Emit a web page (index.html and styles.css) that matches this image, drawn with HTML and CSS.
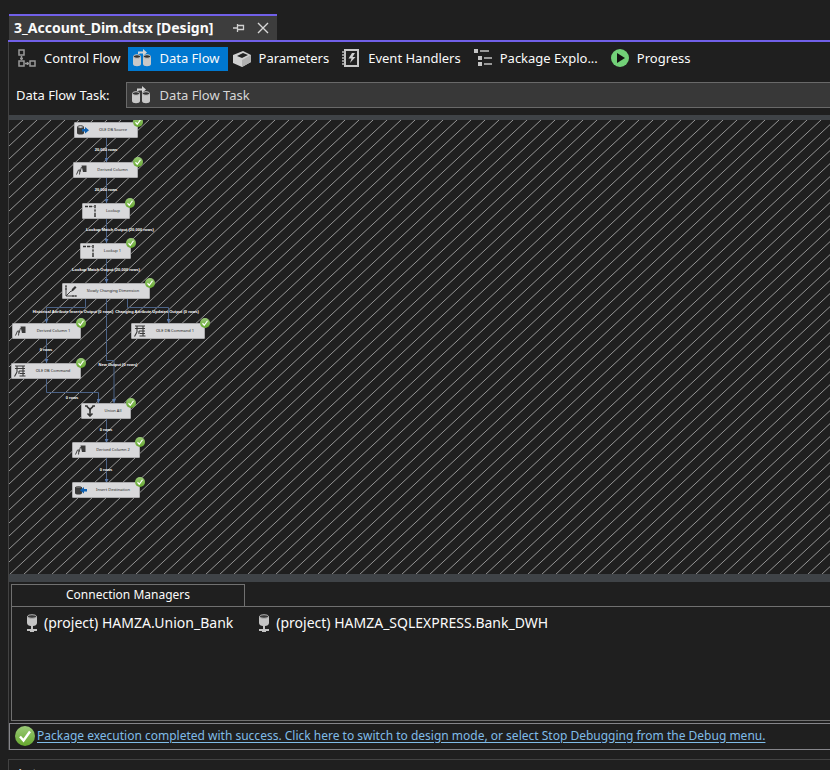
FILE: index.html
```html
<!DOCTYPE html>
<html lang="en">
<head>
<meta charset="utf-8">
<title>3_Account_Dim.dtsx [Design]</title>
<link rel="stylesheet" href="styles.css">
</head>
<body>
<svg class="defs" width="0" height="0" aria-hidden="true">
  <defs>
    <linearGradient id="green" x1="0" y1="0" x2="0" y2="1">
      <stop offset="0" stop-color="#9aca78"/><stop offset="1" stop-color="#66a82e"/>
    </linearGradient>
    <symbol id="check" viewBox="0 0 20 20">
      <circle cx="10" cy="10" r="10" fill="url(#green)"/>
      <path d="M5 10.5l3.5 4L15 5.5" fill="none" stroke="#fff" stroke-width="2.4"/>
    </symbol>
    <symbol id="dataflow" viewBox="0 0 20 20">
      <path d="M1 9v7c0 3 8 3 8 0V9zM11 9v7c0 3 8 3 8 0V9z" fill="#c8c8c8"/>
      <ellipse cx="5" cy="8.5" rx="3.5" ry="1.8" fill="#333" stroke="#c8c8c8"/>
      <ellipse cx="15" cy="8.5" rx="3.5" ry="1.8" fill="#333" stroke="#c8c8c8"/>
      <path d="M6 6V3.500h5V1l4 3.500L11 8V5.500H7.500V6z" fill="#d4d4d4"/>
    </symbol>
    <symbol id="server" viewBox="0 0 12 18">
      <path d="M1 2v7c0 2 2 3 4 3v3H1v2h3v1h4v-1h3v-2H7v-3c2 0 4-1 4-3V2z" fill="#c4c4c4"/>
      <ellipse cx="6" cy="2.500" rx="4.500" ry="1.800" fill="#3a3a3a" stroke="#b0b0b0"/>
    </symbol>
    <symbol id="n-source" viewBox="0 0 12 12">
      <path d="M0 3v6c0 2 7 2 7 0V3z" fill="#3a3a3a"/><ellipse cx="3.500" cy="3" rx="3" ry="1.300" fill="#ddd" stroke="#3a3a3a"/>
      <path d="M5 5h3V3l4 3.200L8 9.500v-2H5z" fill="#0d5fae"/>
    </symbol>
    <symbol id="n-dest" viewBox="0 0 12 12">
      <path d="M0 3v6c0 2 7 2 7 0V3z" fill="#3a3a3a"/><ellipse cx="3.500" cy="3" rx="3" ry="1" fill="#666"/>
      <path d="M12 5H9V3L5 6.200 9 9.500v-2h3z" fill="#0d5fae"/>
    </symbol>
    <symbol id="n-derived" viewBox="0 0 12 12">
      <path d="M5.500 1.500H10.500V8H7z" fill="#3a3a3a"/>
      <path d="M.5 10.500l2-4.500h1.500l-.5 4.500M4 8l1.500-5" fill="none" stroke="#444" stroke-width="1"/>
    </symbol>
    <symbol id="n-lookup" viewBox="0 0 12 12">
      <path d="M0 1.500h3M4 1.500h3M10 0v3M10 4.500v2M10 8v4" stroke="#333" stroke-width="1.500"/>
      <path d="M7 1.500h3v9" fill="none" stroke="#777" stroke-width=".6"/>
    </symbol>
    <symbol id="n-scd" viewBox="0 0 12 12">
      <path d="M1 1v10h10M1 11l5-5" fill="none" stroke="#444"/><path d="M0 1h2M0 4h2M8 10v2M11 10v2" stroke="#333"/>
      <path d="M6 7l1-3 3-3 1.500 1.500-3 3z" fill="#333"/>
    </symbol>
    <symbol id="n-command" viewBox="0 0 12 12">
      <path d="M1 1h10M1 3.500h10M3 1v6M9 1v10M5 6h6M6 8.500h5M5.500 11h6M3 7L.5 11.500M5 6v3" fill="none" stroke="#3a3a3a" stroke-width="1.100"/>
    </symbol>
    <symbol id="n-union" viewBox="0 0 12 12">
      <path d="M1 1h2c1 3 3 1 3 5 0-4 2-2 3-5h2M6 5v6M3.500 8.500L6 11l2.500-2.500" fill="none" stroke="#333" stroke-width="1.600"/>
    </symbol>
  </defs>
</svg>

<div class="app">
  <header class="doc-tabs">
    <div class="doc-tab">
      <span class="doc-title">3_Account_Dim.dtsx [Design]</span>
      <button class="tab-button" aria-label="Pin tab">
        <svg width="12" height="12" viewBox="0 0 12 12"><path d="M0 6h4M4.500 2v8M5 3.500h5.500V8M5 7.500h6" fill="none" stroke="#d0d0d0" stroke-width="1.300"/></svg>
      </button>
      <button class="tab-button" aria-label="Close tab">
        <svg width="12" height="12" viewBox="0 0 12 12"><path d="M1 1l10 10M11 1L1 11" stroke="#d8d8d8" stroke-width="1.400"/></svg>
      </button>
    </div>
  </header>

  <main class="designer">
    <nav class="views">
      <button class="view">
        <svg width="20" height="20" viewBox="0 0 20 20" fill="none" stroke="#9a9a9a" stroke-width="1.500"><path d="M2 2h5v5H2zM2 13h5v5H2zM13 13h5v5h-5zM4.500 8v4M3 10.500h3M8 15.500h4M10.500 14v3"/></svg>
        <span>Control Flow</span>
      </button>
      <button class="view active"><svg width="20" height="20"><use href="#dataflow"/></svg><span>Data Flow</span></button>
      <button class="view">
        <svg width="20" height="20" viewBox="0 0 20 20"><path d="M1 7l10-4 8 4v7l-9 5-9-4z" fill="#d0d0d0"/><path d="M5 8l6-3 5 2-6 3z" fill="#222"/><path d="M10 12l9-5v7l-9 5z" fill="#b0b0b0"/></svg>
        <span>Parameters</span>
      </button>
      <button class="view">
        <svg width="20" height="20" viewBox="0 0 20 20"><path d="M4 2h13v16H4z" fill="#222" stroke="#c8c8c8" stroke-width="2"/><path d="M1 4h4M1 7h4M1 10h4M1 13h4M1 16h4" stroke="#bbb" stroke-width="1.300"/><path d="M11 5L7.500 10.500h3L9 15l5.500-6h-3L14 5z" fill="#d0d0d0"/></svg>
        <span>Event Handlers</span>
      </button>
      <button class="view">
        <svg width="20" height="20" viewBox="0 0 20 20"><path d="M1 1h4v4H1zM5 8h4v4H5zM5 14h4v4H5z" fill="#c4c4c4"/><path d="M7 3h9M11 10h8M11 16h8" stroke="#999" stroke-width="2"/></svg>
        <span>Package Explo...</span>
      </button>
      <button class="view">
        <svg width="20" height="20" viewBox="0 0 20 20"><circle cx="10" cy="10" r="9" fill="#72d078"/><path d="M7 5l8 5-8 5z" fill="#111"/></svg>
        <span>Progress</span>
      </button>
    </nav>

    <div class="task-row">
      <label for="task">Data Flow Task:</label>
      <div class="task-field">
        <svg class="task-icon" width="20" height="20" aria-hidden="true"><use href="#dataflow"/></svg>
        <select id="task"><option>Data Flow Task</option></select>
      </div>
    </div>

    <section class="canvas" aria-label="Data flow">
      <svg class="wires" width="100%" height="100%">
        <defs>
          <pattern id="hatch" width="14" height="13" patternUnits="userSpaceOnUse">
            <path d="M14 0L0 13M1.400 -1.300L-1.400 1.300M15.400 11.700L12.600 14.300" stroke="#959595" stroke-width="1"/>
          </pattern>
          <marker id="arrow" viewBox="0 0 4 4" refX="2" refY="4" markerWidth="4" markerHeight="4" markerUnits="userSpaceOnUse"><path d="M0 0h4L2 4z" fill="#5a78a8"/></marker>
        </defs>
        <rect width="100%" height="100%" fill="url(#hatch)"/>
        <g class="edges">
          <path d="M97.500 18v24"/>
          <path d="M97.500 58v25"/>
          <path d="M97.500 98v25"/>
          <path d="M97.500 138v25"/>
          <path d="M76.500 178v9.500h-39v15.500"/>
          <path d="M118.500 178v9.500h41v15.500"/>
          <path d="M97.500 178v62.500h7.500v42.500"/>
          <path d="M37.500 218v25"/>
          <path d="M37.500 258v14.500h52v10.500"/>
          <path d="M97.500 298v25"/>
          <path d="M97.500 338v25"/>
        </g>
      </svg>

      <div class="node n1"><svg><use href="#n-source"/></svg><span>OLE DB Source</span><svg class="ok"><use href="#check"/></svg></div>
      <div class="node n2"><svg><use href="#n-derived"/></svg><span>Derived Column</span><svg class="ok"><use href="#check"/></svg></div>
      <div class="node n3"><svg><use href="#n-lookup"/></svg><span>Lookup</span><svg class="ok"><use href="#check"/></svg></div>
      <div class="node n4"><svg><use href="#n-lookup"/></svg><span>Lookup 1</span><svg class="ok"><use href="#check"/></svg></div>
      <div class="node n5"><svg><use href="#n-scd"/></svg><span>Slowly Changing Dimension</span><svg class="ok"><use href="#check"/></svg></div>
      <div class="node n6"><svg><use href="#n-derived"/></svg><span>Derived Column 1</span><svg class="ok"><use href="#check"/></svg></div>
      <div class="node n7"><svg><use href="#n-command"/></svg><span>OLE DB Command 1</span><svg class="ok"><use href="#check"/></svg></div>
      <div class="node n8"><svg><use href="#n-command"/></svg><span>OLE DB Command</span><svg class="ok"><use href="#check"/></svg></div>
      <div class="node n9"><svg><use href="#n-union"/></svg><span>Union All</span><svg class="ok"><use href="#check"/></svg></div>
      <div class="node n10"><svg><use href="#n-derived"/></svg><span>Derived Column 2</span><svg class="ok"><use href="#check"/></svg></div>
      <div class="node n11"><svg><use href="#n-dest"/></svg><span>Insert Destination</span><svg class="ok"><use href="#check"/></svg></div>

      <span class="rows r1">20,000 rows</span>
      <span class="rows r2">20,000 rows</span>
      <span class="rows r3">Lookup Match Output (20,000 rows)</span>
      <span class="rows r4">Lookup Match Output (20,000 rows)</span>
      <span class="rows r5">Historical Attribute Inserts Output (0 rows)</span>
      <span class="rows r6">Changing Attribute Updates Output (0 rows)</span>
      <span class="rows r7">0 rows</span>
      <span class="rows r8">New Output (0 rows)</span>
      <span class="rows r9">0 rows</span>
      <span class="rows r10">0 rows</span>
      <span class="rows r11">0 rows</span>
    </section>

    <section class="connections">
      <h2>Connection Managers</h2>
      <ul>
        <li><svg width="12" height="18" aria-hidden="true"><use href="#server"/></svg>(project) HAMZA.Union_Bank</li>
        <li><svg width="12" height="18" aria-hidden="true"><use href="#server"/></svg>(project) HAMZA_SQLEXPRESS.Bank_DWH</li>
      </ul>
    </section>

    <div class="status">
      <svg width="20" height="20" aria-hidden="true"><use href="#check"/></svg>
      <a href="#design">Package execution completed with success. Click here to switch to design mode, or select Stop Debugging from the Debug menu.</a>
    </div>
  </main>

  <section class="autos">Autos</section>
</div>
</body>
</html>
```
FILE: styles.css
```css
* { box-sizing: border-box; }
body {
  margin: 0;
  background: #1f1f1f;
  color: #fafafa;
  font: 13px/20px "Noto Sans", "Open Sans", sans-serif;
}
button, select { font: inherit; color: inherit; }
button { background: none; border: 0; padding: 0; }
svg { flex: none; }
.defs { position: absolute; }
.app {
  height: 100vh;
  overflow: hidden;
  padding: 14px 0 0 8px;
  display: flex;
  flex-direction: column;
}

.doc-tabs { display: flex; padding-left: 1px; border-bottom: 2px solid #7160e8; }
.doc-tab {
  display: flex;
  align-items: center;
  height: 26px;
  width: 268px;
  padding: 0 8px 0 5px;
  border-top: 2px solid #7160e8;
  background: #3d3d3d;
}
.doc-title { flex: 1; font-size: 14px; font-weight: 700; white-space: nowrap; }
.tab-button { display: flex; margin-left: 12px; }

.designer {
  flex: 1;
  min-height: 0;
  display: flex;
  flex-direction: column;
  border-left: 1px solid #424242;
}
.views { display: flex; padding: 5px 0 0 4px; }
.view {
  display: flex;
  align-items: center;
  gap: 7px;
  height: 24px;
  padding: 0 8px 2px 4px;
  white-space: nowrap;
}
.view.active { background: #0078d0; }

.task-row { display: flex; align-items: center; gap: 16px; margin-top: 11px; padding-left: 7px; }
.task-field { position: relative; flex: 1; }
.task-icon { position: absolute; left: 5px; top: 3px; }
.task-field select {
  display: block;
  width: 100%;
  height: 26px;
  padding: 0 0 0 33px;
  appearance: none;
  border: 1px solid #696969;
  border-right: 0;
  border-radius: 0;
  background: #383838;
  color: #d6d6d6;
}

.canvas {
  position: relative;
  flex: 1;
  min-height: 0;
  margin-top: 7px;
  overflow: hidden;
  border-top: 5px solid #3f4347;
  border-bottom: 8px solid #3f4347;
}
.wires { position: absolute; inset: 0; }
.edges path { fill: none; stroke: #4b6286; stroke-width: 1px; marker-end: url(#arrow); }
.node {
  position: absolute;
  display: flex;
  align-items: center;
  height: 16px;
  padding-left: 2px;
  border: 1px solid #aaaaac;
  border-radius: 1px;
  background: #d8d8da;
  color: #222;
  font-size: 4px;
  line-height: 8px;
}
.node svg { width: 12px; height: 12px; }
.node span { flex: 1; text-align: center; white-space: nowrap; }
.node .ok { position: absolute; right: -6px; top: -6px; width: 10px; height: 10px; }
.n1 { left: 65px; top: 2px; width: 64px; }
.n2 { left: 64px; top: 42px; width: 65px; }
.n3 { left: 73px; top: 83px; width: 48px; }
.n4 { left: 71px; top: 123px; width: 51px; }
.n5 { left: 53px; top: 163px; width: 88px; }
.n6 { left: 3px; top: 203px; width: 69px; }
.n7 { left: 122px; top: 203px; width: 74px; }
.n8 { left: 2px; top: 243px; width: 70px; }
.n9 { left: 72px; top: 283px; width: 50px; }
.n10 { left: 63px; top: 322px; width: 68px; }
.n11 { left: 63px; top: 362px; width: 68px; }
.rows {
  position: absolute;
  transform: translate(-50%, -50%);
  color: #fff;
  font-family: "Liberation Sans", sans-serif;
  font-size: 4px;
  font-weight: 700;
  line-height: 6px;
  white-space: nowrap;
}
.r1 { left: 97px; top: 30px; }
.r2 { left: 97px; top: 70px; }
.r3 { left: 111px; top: 110px; }
.r4 { left: 97px; top: 150px; }
.r5 { left: 64px; top: 192px; }
.r6 { left: 148px; top: 192px; }
.r7 { left: 37px; top: 230px; }
.r8 { left: 109px; top: 245px; }
.r9 { left: 63px; top: 278px; }
.r10 { left: 97px; top: 310px; }
.r11 { left: 97px; top: 350px; }

.connections { padding: 2px 0 0 2px; }
.connections h2 {
  width: 234px;
  height: 22px;
  margin: 0;
  border: 1px solid #707070;
  border-bottom: 0;
  font-size: 12px;
  font-weight: 400;
  text-align: center;
}
.connections ul {
  display: flex;
  gap: 25px;
  height: 115px;
  margin: 0;
  padding: 6px 14px;
  list-style: none;
  border: 1px solid #707070;
  border-right: 0;
}
.connections li {
  display: flex;
  align-items: center;
  gap: 6px;
  height: 20px;
  font-size: 14px;
  white-space: nowrap;
}

.status {
  display: flex;
  align-items: center;
  gap: 2px;
  height: 27px;
  margin-top: 2px;
  padding: 0 5px 2px;
  border: 1px solid #85858a;
  border-right: 0;
  white-space: nowrap;
}
.status a { color: #7fbce8; font-size: 12px; text-underline-offset: 2px; }

.autos { height: 11px; margin-top: 9px; padding: 3px 7px; border: 1px solid #424242; border-width: 1px 0 0 1px; color: #d0d0d0; }
```
